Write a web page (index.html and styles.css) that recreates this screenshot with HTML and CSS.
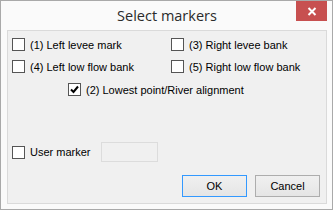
FILE: index.html
```html
<!DOCTYPE html>
<html lang="en">
<head>
    <meta charset="UTF-8">
    <title>Select markers</title>
    <link rel="stylesheet" href="styles.css">
</head>
<body>
    <div class="window">
        <div class="titlebar">
            <span></span>
            <div class="title">Select markers</div>
            <button class="close-btn" aria-label="Close">
                <svg width="10" height="9" viewBox="0 0 10 9">
                    <path d="M1.5 1 L8.5 8 M8.5 1 L1.5 8" stroke="#fff" stroke-width="2"/>
                </svg>
            </button>
        </div>

        <div class="content">
            <div class="options">
                <label class="check"><span class="box"></span>(1) Left levee mark</label>
                <label class="check"><span class="box"></span>(3) Right levee bank</label>
                <label class="check"><span class="box"></span>(4) Left low flow bank</label>
                <label class="check"><span class="box"></span>(5) Right low flow bank</label>
                <label class="check wide">
                    <span class="box">
                        <svg width="11" height="11" viewBox="0 0 11 11">
                            <path d="M2 5.5 L4.5 8 L9 2.5" fill="none" stroke="#000" stroke-width="2"/>
                        </svg>
                    </span>(2) Lowest point/River alignment
                </label>
            </div>

            <div class="user-row">
                <label class="check user-label"><span class="box"></span>User marker</label>
                <input type="text" class="user-input" disabled>
            </div>

            <div class="buttons">
                <button class="btn btn-ok">OK</button>
                <button class="btn">Cancel</button>
            </div>
        </div>
    </div>
</body>
</html>
```

FILE: styles.css
```css
* {
    margin: 0;
    padding: 0;
    box-sizing: border-box;
}

body {
    background-color: #fff;
    font-family: "Liberation Sans", Arial, sans-serif;
    font-size: 11px;
    color: #000;
}

.window {
    width: 333px;
    height: 210px;
    border: 1px solid #a9a9a9;
    background-color: #fafafa;
    padding: 0 5px 5px 6px;
    display: flex;
    flex-direction: column;
}

.titlebar {
    height: 29px;
    display: grid;
    grid-template-columns: 1fr auto 1fr;
    align-items: start;
    margin-left: -6px;
    margin-right: -5px;
}

.title {
    font-family: "Open Sans", "Noto Sans", sans-serif;
    font-size: 14.5px;
    color: #2b2b2b;
    line-height: 29px;
    padding-left: 1px;
}

.close-btn {
    justify-self: end;
    width: 31px;
    height: 20px;
    margin-right: 5px;
    background-color: #c75050;
    border: none;
    display: flex;
    align-items: center;
    justify-content: center;
}

.content {
    width: 320px;
    height: 174px;
    border: 1px solid #dadada;
    background-color: #f0f0f0;
    padding: 7px 6px 0 4px;
}

.options {
    display: grid;
    grid-template-columns: 159px auto;
    row-gap: 9px;
}

.check {
    display: flex;
    align-items: center;
    height: 13px;
    white-space: nowrap;
}

.box {
    width: 13px;
    height: 13px;
    border: 1px solid #555;
    background-color: #fff;
    margin-right: 5px;
    display: flex;
    align-items: center;
    justify-content: center;
    flex-shrink: 0;
}

.wide {
    grid-column: 1 / 3;
    padding-left: 56px;
    margin-top: 1px;
}

.user-row {
    display: flex;
    align-items: center;
    height: 20px;
    margin-top: 46px;
}

.user-label {
    width: 89px;
}

.user-input {
    width: 57px;
    height: 20px;
    border: 1px solid #dcdcdc;
    background-color: #f0f0f0;
}

.buttons {
    display: flex;
    justify-content: flex-end;
    gap: 8px;
    margin-top: 13px;
}

.btn {
    width: 65px;
    height: 22px;
    border: 1px solid #adadad;
    background: linear-gradient(#f0f0f0, #e5e5e5);
    font-family: "Liberation Sans", Arial, sans-serif;
    font-size: 11px;
    color: #000;
}

.btn-ok {
    border-color: #3399ff;
}
```
